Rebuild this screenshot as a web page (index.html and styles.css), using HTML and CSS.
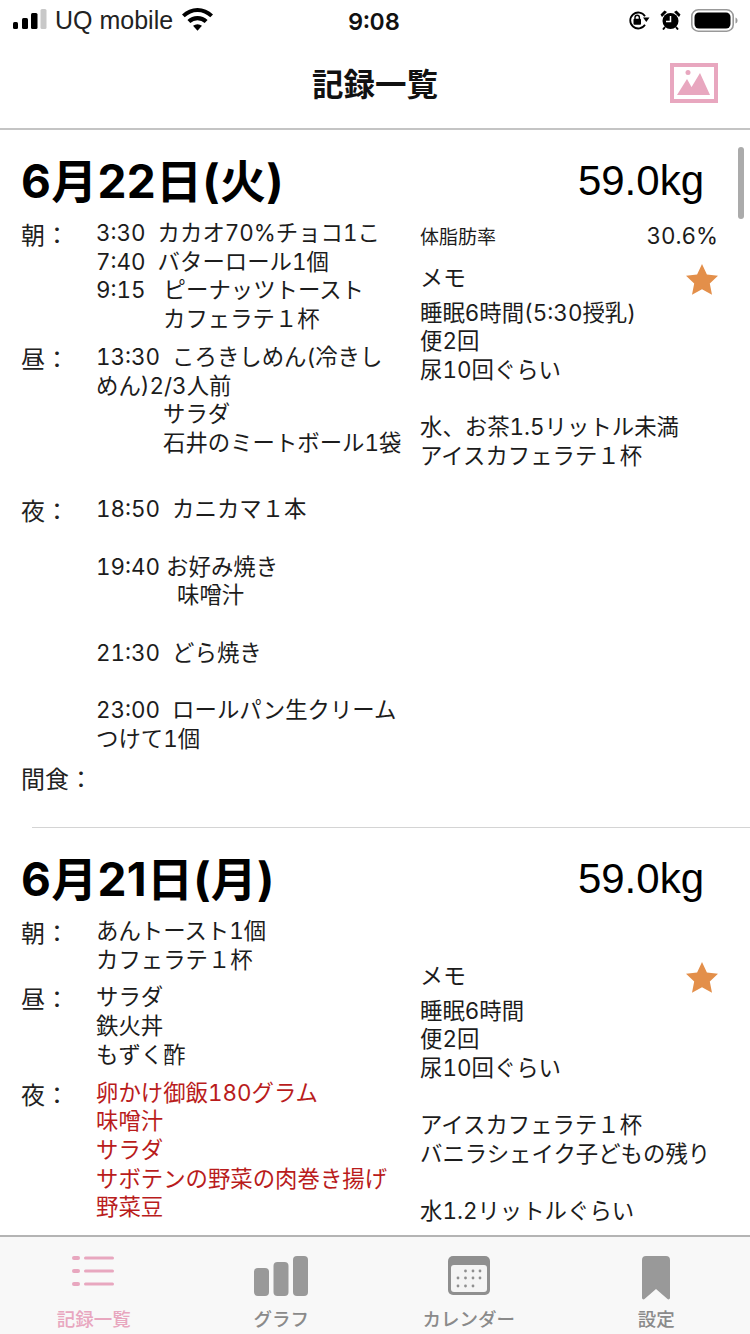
FILE: index.html
```html
<!DOCTYPE html>
<html lang="ja">
<head>
<meta charset="utf-8">
<title>記録一覧</title>
<link rel="stylesheet" href="styles.css">
</head>
<body>
<div class="page">
  <div class="status">
    <div class="status-left">
      <svg width="34" height="22" viewBox="0 0 34 22"><rect x="0" y="13" width="5" height="7" rx="1.500" fill="#000"/><rect x="9" y="9" width="6" height="11" rx="1.500" fill="#000"/><rect x="18" y="4" width="6.500" height="16" rx="1.500" fill="#000"/><rect x="27.500" y="0" width="6" height="20" rx="1.500" fill="#c8c8c8"/></svg>
      <span class="carrier">UQ mobile</span>
      <svg class="wifi" width="31" height="24" viewBox="0 0 32 24"><path d="M16 23l-4.600-5a7 7 0 0 1 9.200 0z" fill="#000"/><path d="M8.600 15.200l-3-3.200a15 15 0 0 1 20.800 0l-3 3.200a11 11 0 0 0-14.800 0z" fill="#000"/><path d="M2.800 9.200L0 6.200a23 23 0 0 1 32 0l-2.800 3a19 19 0 0 0-26.400 0z" fill="#000"/></svg>
    </div>
    <span class="clock">9:08</span>
    <div class="status-right">
      <svg width="22" height="19" viewBox="0 0 22 19"><path d="M17 5.200A8 8 0 1 0 17 13.800" fill="none" stroke="#000" stroke-width="1.800"/><path d="M15 6.500h6.500l-3.200 4.500z" fill="#000"/><rect x="5.500" y="7.800" width="7.500" height="6" rx="1" fill="#000"/><path d="M7 8.500V6.500a2.200 2.200 0 0 1 4.400 0v2" fill="none" stroke="#000" stroke-width="1.400"/></svg>
      <svg width="21" height="20" viewBox="0 0 21 20"><circle cx="10.500" cy="11" r="8" fill="#000"/><path d="M10.500 6v5.500H6" fill="none" stroke="#fff" stroke-width="1.500"/><path d="M0.500 4.500l4-4 2.500 1.500-5 5zM20.500 4.500l-4-4-2.500 1.500 5 5z" fill="#000"/><path d="M5 17l-2 2.500M16 17l2 2.500" stroke="#000" stroke-width="2"/></svg>
      <svg width="47" height="23" viewBox="0 0 47 23"><rect x="0.800" y="0.800" width="41.400" height="21.400" rx="6.500" fill="#fff" stroke="#999" stroke-width="1.600"/><rect x="3.500" y="3.500" width="36" height="16" rx="4.500" fill="#000"/><path d="M44.500 8.500v6c1.400-.5 2-1.500 2-3s-.6-2.500-2-3z" fill="#999"/></svg>
    </div>
  </div>

  <header class="nav">
    <h1 class="nav-title">記録一覧</h1>
    <svg class="nav-icon" width="48" height="40" viewBox="0 0 48 40"><rect x="2" y="2" width="44" height="36" fill="none" stroke="#e8a7bf" stroke-width="4"/><circle cx="18" cy="9.500" r="2.500" fill="#e8a7bf"/><path d="M17 16L7 32h19zM30 10L21 25l4.500 7H40z" fill="#e8a7bf"/></svg>
  </header>

  <main class="list">
    <article class="entry">
      <div class="entry-head">
        <h2 class="date">6月22日(火)</h2>
        <span class="weight">59.0kg</span>
      </div>
      <div class="entry-body">
        <div class="meals">
          <div class="meal">
            <span class="meal-label">朝：</span>
            <div class="meal-text">
              <p>3:30&nbsp; カカオ70%チョコ1こ</p>
              <p>7:40&nbsp; バターロール1個</p>
              <p>9:15 &nbsp; ピーナッツトースト</p>
              <p class="indent">カフェラテ１杯</p>
            </div>
          </div>
          <div class="meal">
            <span class="meal-label">昼：</span>
            <div class="meal-text">
              <p>13:30&nbsp; ころきしめん(冷きしめん)2/3人前</p>
              <p class="indent">サラダ</p>
              <p class="indent">石井のミートボール1袋</p>
              <p>&nbsp;</p>
            </div>
          </div>
          <div class="meal">
            <span class="meal-label">夜：</span>
            <div class="meal-text">
              <p>18:50&nbsp; カニカマ１本</p>
              <p>&nbsp;</p>
              <p>19:40 お好み焼き</p>
              <p class="indent-deep">味噌汁</p>
              <p>&nbsp;</p>
              <p>21:30&nbsp; どら焼き</p>
              <p>&nbsp;</p>
              <p>23:00&nbsp;&nbsp;ロールパン生クリームつけて1個</p>
            </div>
          </div>
          <div class="meal">
            <span class="meal-label wide">間食：</span>
          </div>
        </div>
        <aside class="side">
          <div class="fat"><span class="fat-label">体脂肪率</span><span class="fat-value">30.6%</span></div>
          <div class="memo-head">
            <span>メモ</span>
            <svg class="star" width="34" height="32" viewBox="0 0 34 32"><path d="M17 1l4.900 10.400 11.100 1.400-8.200 7.700 2.200 11.200L17 26.300 7 31.700l2.200-11.200L1 12.800l11.100-1.400z" fill="#e38f4a"/></svg>
          </div>
          <p>睡眠6時間(5:30授乳)</p>
          <p>便2回</p>
          <p>尿10回ぐらい</p>
          <p>&nbsp;</p>
          <p>水、お茶1.5リットル未満</p>
          <p>アイスカフェラテ１杯</p>
        </aside>
      </div>
    </article>

    <article class="entry">
      <div class="entry-head">
        <h2 class="date">6月21日(月)</h2>
        <span class="weight">59.0kg</span>
      </div>
      <div class="entry-body">
        <div class="meals">
          <div class="meal">
            <span class="meal-label">朝：</span>
            <div class="meal-text">
              <p>あんトースト1個</p>
              <p>カフェラテ１杯</p>
            </div>
          </div>
          <div class="meal">
            <span class="meal-label">昼：</span>
            <div class="meal-text">
              <p>サラダ</p>
              <p>鉄火丼</p>
              <p>もずく酢</p>
            </div>
          </div>
          <div class="meal">
            <span class="meal-label">夜：</span>
            <div class="meal-text red">
              <p>卵かけ御飯180グラム</p>
              <p>味噌汁</p>
              <p>サラダ</p>
              <p>サボテンの野菜の肉巻き揚げ</p>
              <p>野菜豆</p>
            </div>
          </div>
        </div>
        <aside class="side">
          <div class="fat"></div>
          <div class="memo-head">
            <span>メモ</span>
            <svg class="star" width="34" height="32" viewBox="0 0 34 32"><path d="M17 1l4.900 10.400 11.100 1.400-8.200 7.700 2.200 11.200L17 26.300 7 31.700l2.200-11.200L1 12.800l11.100-1.400z" fill="#e38f4a"/></svg>
          </div>
          <p>睡眠6時間</p>
          <p>便2回</p>
          <p>尿10回ぐらい</p>
          <p>&nbsp;</p>
          <p>アイスカフェラテ１杯</p>
          <p>バニラシェイク子どもの残り</p>
          <p>&nbsp;</p>
          <p>水1.2リットルぐらい</p>
        </aside>
      </div>
    </article>
    <div class="scrollbar"></div>
  </main>

  <nav class="tabs">
    <div class="tab active">
      <div class="tab-icon"><svg width="44" height="32" viewBox="0 0 44 32"><g fill="#e8a7bf"><rect x="0" y="0" width="8" height="4" rx="2"/><rect x="0" y="13" width="8" height="4" rx="2"/><rect x="0" y="26" width="8" height="4" rx="2"/><rect x="12" y="0.500" width="30" height="3" rx="1.500"/><rect x="12" y="13.500" width="30" height="3" rx="1.500"/><rect x="12" y="26.500" width="30" height="3" rx="1.500"/></g></svg></div>
      <span>記録一覧</span>
    </div>
    <div class="tab">
      <div class="tab-icon"><svg width="54" height="40" viewBox="0 0 54 40"><g fill="#999"><rect x="0" y="12" width="15" height="28" rx="4"/><rect x="19.500" y="6" width="15" height="34" rx="4"/><rect x="39" y="0" width="15" height="40" rx="4"/></g></svg></div>
      <span>グラフ</span>
    </div>
    <div class="tab">
      <div class="tab-icon"><svg width="42" height="40" viewBox="0 0 42 40"><rect x="0" y="0" width="42" height="39" rx="5" fill="#8f8f8f"/><rect x="3" y="9" width="36" height="27" rx="3" fill="#f4f4f4"/><g fill="#8f8f8f"><circle cx="17.500" cy="15" r="1.400"/><circle cx="25" cy="15" r="1.400"/><circle cx="32" cy="15" r="1.400"/><circle cx="10" cy="22" r="1.400"/><circle cx="17.500" cy="22" r="1.400"/><circle cx="25" cy="22" r="1.400"/><circle cx="32" cy="22" r="1.400"/><circle cx="10" cy="30" r="1.400"/><circle cx="17.500" cy="30" r="1.400"/><circle cx="25" cy="30" r="1.400"/></g></svg></div>
      <span>カレンダー</span>
    </div>
    <div class="tab">
      <div class="tab-icon"><svg width="28" height="46" viewBox="0 0 28 46"><path d="M4 0h20a4 4 0 0 1 4 4v38a1.500 1.500 0 0 1-2.500 1L14 33 2.500 43A1.500 1.500 0 0 1 0 42V4a4 4 0 0 1 4-4z" fill="#999"/></svg></div>
      <span>設定</span>
    </div>
  </nav>
</div>
</body>
</html>
```

FILE: styles.css
```css
* { box-sizing: border-box; }
html, body { margin: 0; padding: 0; }
body {
  background: #fff;
  color: #111;
  font-family: "Inter", "Noto Sans CJK JP", sans-serif;
  font-variant-numeric: tabular-nums;
}
p, h1, h2 { margin: 0; }
.page {
  width: 750px;
  height: 1334px;
  display: flex;
  flex-direction: column;
  overflow: hidden;
}
.status {
  height: 40px;
  flex: none;
  display: flex;
  align-items: center;
  justify-content: space-between;
  padding: 0 12px 0 13px;
  position: relative;
}
.status-left { display: flex; align-items: center; gap: 8px; }
.status-right { display: flex; align-items: center; gap: 10px; }
.carrier { font-family: "Liberation Sans", sans-serif; font-size: 25px; color: #222; }
.wifi { margin-left: 1px; }
.clock {
  font-size: 23.500px;
  font-weight: 600;
  position: absolute;
  left: 348px;
  top: 7px;
}
.nav {
  height: 90px;
  flex: none;
  display: flex;
  align-items: center;
  justify-content: center;
  position: relative;
  border-bottom: 2px solid #c4c4c4;
}
.nav-title { font-size: 31.500px; font-weight: 700; color: #111; margin-top: -4px; }
.nav-icon { position: absolute; left: 670px; top: 23px; }
.list {
  flex: 1;
  min-height: 0;
  overflow: hidden;
  position: relative;
  font-size: 22.400px;
  line-height: 28.700px;
}
.entry { padding: 0 32px 0 21px; height: 697px; }
.entry + .entry { border-top: 1px solid #d4d4d4; margin-left: 32px; padding-left: 0; }
.entry + .entry .entry-head,
.entry + .entry .entry-body { margin-left: -11px; }
.entry-head {
  display: flex;
  justify-content: space-between;
  align-items: center;
  padding: 22px 14px 0 0;
  height: 80px;
}
.date {
  font-size: 46px;
  font-weight: 700;
  font-variant-numeric: normal;
  letter-spacing: 0.300px;
  color: #000;
  line-height: 56px;
}
.weight { font-family: "Liberation Sans", sans-serif; font-size: 42px; color: #000; line-height: 56px; }
.entry-body { display: flex; gap: 20px; margin-top: 9px; }
.meals { width: 379px; flex: none; }
.meal { display: flex; margin-bottom: 9px; }
.meal-label { width: 75px; flex: none; font-size: 24px; color: #222; padding-top: 3px; }
.meal-label.wide { width: auto; }
.meal-text { flex: 1; min-width: 0; margin-right: -3px; color: #1c1c1c; }
.indent { padding-left: 67px; }
.indent-deep { padding-left: 81px; }
.red { color: #b91c1c; }
.side { flex: 1; min-width: 0; color: #1c1c1c; padding-top: 3px; }
.fat {
  display: flex;
  justify-content: space-between;
  align-items: baseline;
  height: 36.500px;
}
.fat-label { font-size: 19px; }
.memo-head {
  display: flex;
  justify-content: space-between;
  align-items: center;
  height: 40px;
  font-size: 23px;
}
.star { flex: none; margin-right: -1px; }
.scrollbar {
  position: absolute;
  left: 738px;
  top: 17px;
  width: 6px;
  height: 72px;
  background: #ababab;
  border-radius: 3px;
}
.tabs {
  height: 99px;
  flex: none;
  display: flex;
  background: #f8f8f8;
  border-top: 2px solid #b4b4b4;
  padding: 19px 0 0;
}
.tab {
  flex: 1;
  display: flex;
  flex-direction: column;
  align-items: center;
  font-size: 18.500px;
  font-weight: 500;
  color: #8a8a8a;
  line-height: 24px;
}
.tab-icon { height: 51px; }
.tab-icon svg { display: block; }
.tab.active { color: #e8a7bf; }
```
